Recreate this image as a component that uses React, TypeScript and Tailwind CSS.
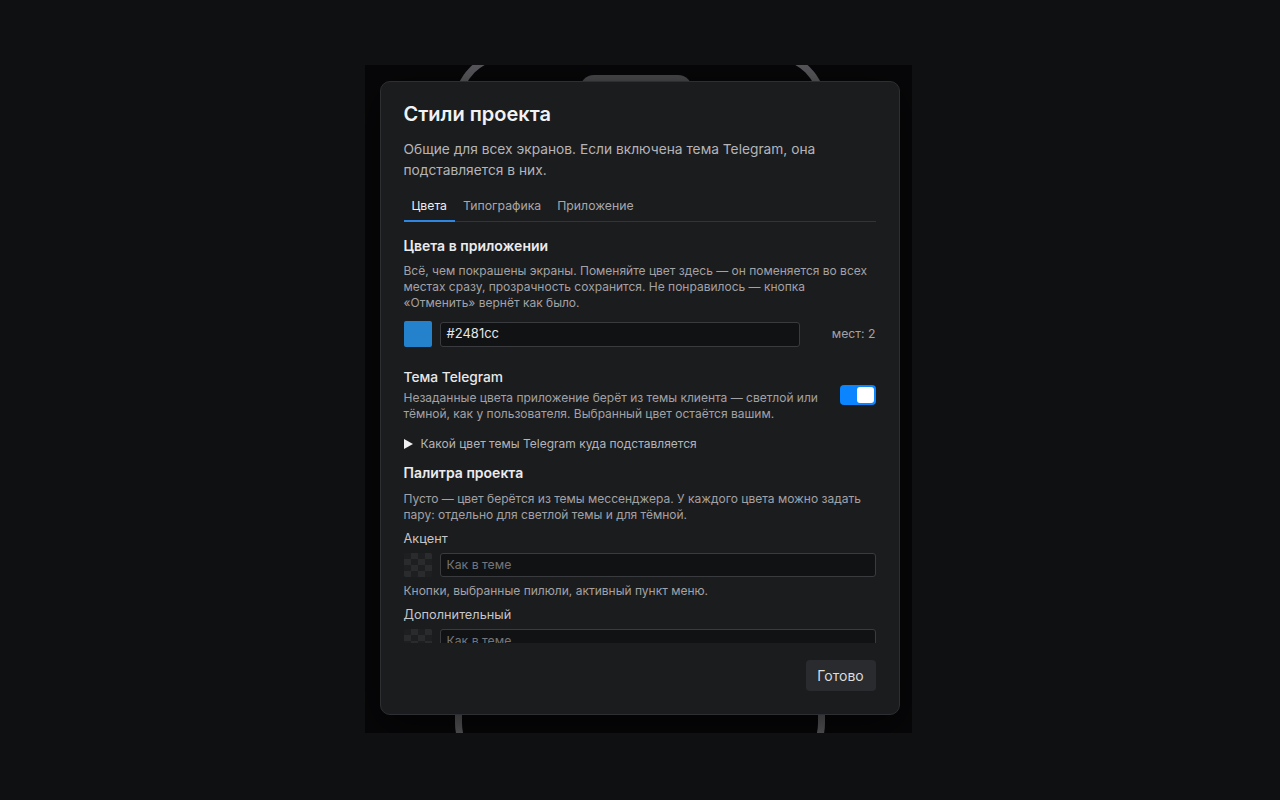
import React from "react";

const font = { fontFamily: "Inter, 'Noto Sans', sans-serif" };

function Checker() {
  return (
    <div className="w-7 h-6 shrink-0 rounded-[2px] bg-[conic-gradient(#2a2b2d_25%,#1e1f21_0_50%,#2a2b2d_0_75%,#1e1f21_0)] bg-[length:14px_12px]" />
  );
}

export default function App() {
  return (
    <div
      className="w-full h-screen bg-[#0f1012] flex items-center justify-center"
      style={font}
    >
      <div className="relative mr-[4px] mb-[2px] w-[547px] h-[668px] bg-[#070709] overflow-hidden">
        {/* phone frame behind overlay */}
        <div className="absolute left-[90px] top-[-12px] w-[370px] h-[720px] rounded-[50px] border-[7px] border-[#5a5a5e]" />
        <div className="absolute left-[215px] top-[10px] w-[112px] h-[30px] rounded-[14px] bg-[#4a4a4e]" />

        {/* dialog */}
        <div className="absolute left-[15px] top-[16px] w-[520px] h-[634px] rounded-[10px] bg-[#1b1c1e] border border-[#2e2f32] shadow-[0_10px_40px_rgba(0,0,0,0.6)] flex flex-col">
          <div className="px-[23px] pt-[19px]">
            <h1 className="text-[20px] leading-[26px] font-semibold text-[#f2f2f4]">
              Стили проекта
            </h1>
            <p className="mt-3 text-[13.75px] leading-[21px] text-[#b4b4b8]">
              Общие для всех экранов. Если включена тема Telegram, она
              подставляется в них.
            </p>
            <div className="mt-4 flex border-b border-[#333437]">
              <div className="px-2 pb-[5px] text-[12.25px] leading-[18px] text-[#ededef] border-b-2 border-[#2f86e0] -mb-px">
                Цвета
              </div>
              <div className="px-2 pb-[5px] text-[12.25px] leading-[18px] text-[#a8a8ac]">
                Типографика
              </div>
              <div className="px-2 pb-[5px] text-[12.25px] leading-[18px] text-[#a8a8ac]">
                Приложение
              </div>
            </div>
          </div>

          <div className="flex-1 min-h-0 overflow-hidden px-[23px] pt-[14px]">
            <h2 className="text-[14px] leading-5 font-semibold text-[#ececee]">
              Цвета в приложении
            </h2>
            <p className="mt-[7px] text-[12px] leading-4 text-[#a2a2a6]">
              Всё, чем покрашены экраны. Поменяйте цвет здесь — он поменяется
              во всех местах сразу, прозрачность сохранится. Не понравилось —
              кнопка «Отменить» вернёт как было.
            </p>
            <div className="mt-2.5 flex items-center gap-2">
              <div className="w-7 h-[26px] rounded-[2px] bg-[#2481cc]" />
              <div className="w-[360px] h-[25px] rounded-[3px] border border-[#3a3b3e] bg-[#111214] px-[6px] flex items-center text-[13px] text-[#e6e6e8]">
                #2481cc
              </div>
              <div className="ml-auto text-[12.25px] text-[#a2a2a6]">мест: 2</div>
            </div>

            <div className="mt-5 flex items-center gap-3">
              <div className="flex-1">
                <div className="text-[13.75px] leading-5 font-medium text-[#e8e8ea]">
                  Тема Telegram
                </div>
                <p className="mt-[3px] text-[12px] leading-4 text-[#a2a2a6]">
                  Незаданные цвета приложение берёт из темы клиента — светлой
                  или тёмной, как у пользователя. Выбранный цвет остаётся
                  вашим.
                </p>
              </div>
              <div className="w-9 h-5 rounded-[4px] bg-[#0a84ff] flex items-center justify-end p-[2px] shrink-0">
                <div className="w-[17px] h-4 rounded-[3px] bg-white" />
              </div>
            </div>

            <div className="mt-3.5 flex items-center gap-2 text-[12px] leading-4 text-[#b4b4b8]">
              <svg width="9" height="10" viewBox="0 0 9 10" className="shrink-0">
                <path d="M0 0 L9 5 L0 10 Z" fill="#f0f0f2" />
              </svg>
              <span>Какой цвет темы Telegram куда подставляется</span>
            </div>

            <h2 className="mt-[11px] text-[14px] leading-5 font-semibold text-[#ececee]">
              Палитра проекта
            </h2>
            <p className="mt-2 text-[12px] leading-4 text-[#a2a2a6]">
              Пусто — цвет берётся из темы мессенджера. У каждого цвета можно
              задать пару: отдельно для светлой темы и для тёмной.
            </p>

            <div className="mt-[7px] text-[12.75px] leading-[18px] text-[#c6c6ca]">
              Акцент
            </div>
            <div className="mt-[5px] flex items-center gap-2">
              <Checker />
              <div className="flex-1 h-6 rounded-[3px] border border-[#3a3b3e] bg-[#111214] px-[6px] flex items-center text-[12.25px] text-[#76767a]">
                Как в теме
              </div>
            </div>
            <p className="mt-[6px] text-[12px] leading-4 text-[#a2a2a6]">
              Кнопки, выбранные пилюли, активный пункт меню.
            </p>
            <div className="mt-[7px] text-[12.75px] leading-[18px] text-[#c6c6ca]">
              Дополнительный
            </div>
            <div className="mt-[5px] flex items-center gap-2">
              <Checker />
              <div className="flex-1 h-6 rounded-[3px] border border-[#3a3b3e] bg-[#111214] px-[6px] flex items-center text-[12.25px] text-[#76767a]">
                Как в теме
              </div>
            </div>
          </div>

          <div className="px-[23px] pt-[17px] pb-[23px] flex justify-end">
            <button className="h-[31px] w-[70px] rounded-[4px] bg-[#2a2b2e] text-[14px] text-[#dcdcde]">
              Готово
            </button>
          </div>
        </div>
      </div>
    </div>
  );
}
